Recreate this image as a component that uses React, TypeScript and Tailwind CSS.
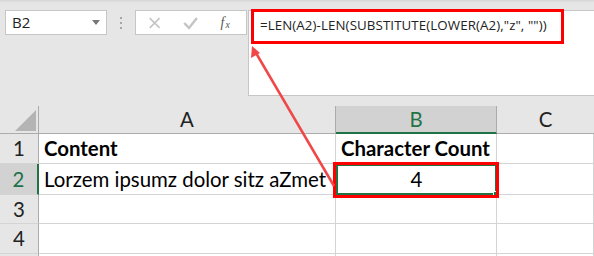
import React from "react"

const cols = ["w-[297px]", "w-[161px]", "w-[97px]"]

const Cell = ({ w, children, className = "" }: { w: string; children?: React.ReactNode; className?: string }) => (
  <div
    className={`${w} flex h-full shrink-0 items-center whitespace-nowrap border-r border-b border-[#d4d4d4] bg-white px-[5px] ${className}`}
  >
    {children}
  </div>
)

const RowHead = ({ n, active = false }: { n?: number; active?: boolean }) => (
  <div
    className={`flex h-full w-[39px] shrink-0 items-center justify-center border-b border-[#d4d4d4] ${
      active ? "border-r-2 border-r-[#217346] bg-[#d2d2d2] text-[#217346]" : "border-r border-r-[#ababab] bg-[#e6e6e6] text-[#222]"
    }`}
  >
    {n}
  </div>
)

export default function App() {
  return (
    <div className="relative h-[256px] w-[594px] overflow-hidden bg-[#e6e6e6] font-['Lato',sans-serif]">
      <div className="h-[3px] bg-gradient-to-b from-[#d6d6d6] to-[#e6e6e6]"></div>

      {/* formula bar strip */}
      <div className="flex h-[103px] items-start pt-[7px] font-['Open_Sans',sans-serif]">
        <div className="ml-[5px] flex h-[25px] w-[102px] items-center justify-between border border-[#c6c6c6] bg-white pr-[6px] pl-[6px] text-[15px] text-[#222]">
          <span>B2</span>
          <span className="h-0 w-0 border-t-[5px] border-r-[4px] border-l-[4px] border-t-[#777] border-r-transparent border-l-transparent"></span>
        </div>
        <div className="ml-[13px] mt-[7px] flex flex-col gap-[3px]">
          <span className="h-[2px] w-[2px] bg-[#a6a6a6]"></span>
          <span className="h-[2px] w-[2px] bg-[#a6a6a6]"></span>
          <span className="h-[2px] w-[2px] bg-[#a6a6a6]"></span>
        </div>
        <div className="ml-[13px] flex h-[25px] w-[112px] items-center border border-[#c6c6c6] bg-white">
          <svg width="112" height="23" viewBox="0 0 112 23">
            <path d="M14 7 L24 17 M24 7 L14 17" stroke="#c4c4c4" strokeWidth="1.6" />
            <path d="M49 12 L54 17 L62 7" stroke="#c4c4c4" strokeWidth="2.4" fill="none" />
            <text x="86" y="16" fontFamily="Liberation Serif, serif" fontStyle="italic" fontSize="14" fill="#555">
              f
            </text>
            <text x="91" y="17" fontFamily="Liberation Serif, serif" fontStyle="italic" fontSize="10" fill="#555">
              x
            </text>
          </svg>
        </div>
        <div className="ml-[1px] h-[86px] flex-1 border border-r-0 border-[#c6c6c6] bg-white pl-[11px] pt-[5px] text-[13.3px] tracking-[0.1px] whitespace-nowrap text-[#222]">
          =LEN(A2)-LEN(SUBSTITUTE(LOWER(A2),"z", ""))
        </div>
      </div>

      {/* grid */}
      <div className="text-[20.4px] text-black">
        <div className="flex h-[28px] text-[#222]">
          <div className="relative h-full w-[39px] shrink-0 border-r border-b border-[#ababab]">
            <svg className="absolute top-[4px] left-[15px]" width="21" height="21">
              <polygon points="0,21 21,0 21,21" fill="#b4b4b4" />
            </svg>
          </div>
          <div className="flex h-full w-[297px] shrink-0 items-center justify-center border-r border-b border-[#ababab]">A</div>
          <div className="flex h-full w-[161px] shrink-0 items-center justify-center border-r border-b-2 border-r-[#ababab] border-b-[#217346] bg-[#d2d2d2] text-[#217346]">
            B
          </div>
          <div className="flex h-full w-[97px] shrink-0 items-center justify-center border-b border-[#ababab]">C</div>
        </div>
        <div className="flex h-[30px]">
          <RowHead n={1} />
          <Cell w={cols[0]} className="font-bold">Content</Cell>
          <Cell w={cols[1]} className="font-bold">Character Count</Cell>
          <Cell w={cols[2]} />
        </div>
        <div className="flex h-[31px]">
          <RowHead n={2} active />
          <Cell w={cols[0]}>Lorzem ipsumz dolor sitz aZmet</Cell>
          <div className="relative flex h-full w-[161px] shrink-0 items-center justify-center border-2 border-[#217346] bg-white">
            4
            <span className="absolute -right-[3px] -bottom-[3px] h-[5px] w-[5px] border border-white bg-[#217346]"></span>
          </div>
          <Cell w={cols[2]} />
        </div>
        <div className="flex h-[29px]">
          <RowHead n={3} />
          <Cell w={cols[0]} />
          <Cell w={cols[1]} />
          <Cell w={cols[2]} />
        </div>
        <div className="flex h-[30px]">
          <RowHead n={4} />
          <Cell w={cols[0]} />
          <Cell w={cols[1]} />
          <Cell w={cols[2]} />
        </div>
        <div className="flex h-[30px]">
          <RowHead />
          <Cell w={cols[0]} />
          <Cell w={cols[1]} />
          <Cell w={cols[2]} />
        </div>
      </div>

      {/* callouts */}
      <div className="absolute top-[9px] left-[251px] h-[35px] w-[313px] border-[3px] border-[#ff0000]"></div>
      <div className="absolute top-[162px] left-[333px] h-[36px] w-[166px] border-[3px] border-[#ff0000]"></div>
      <svg className="absolute top-0 left-0" width="594" height="256">
        <line x1="334" y1="186" x2="256" y2="53" stroke="#f04848" strokeWidth="2.5" />
        <polygon points="252,46 251,58 260,53" fill="#f04848" />
      </svg>
    </div>
  )
}
